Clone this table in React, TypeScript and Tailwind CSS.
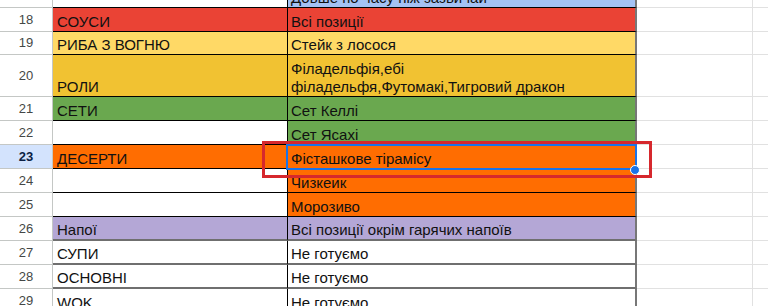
import React from "react";

type Row = {
  n: number;
  h: number;
  a: string;
  b: React.ReactNode;
  aBg: string;
  bBg: string;
  line: "black" | "gray";
};

const RED = "bg-[#ea4335]";
const YEL = "bg-[#ffd966]";
const GOLD = "bg-[#f1c232]";
const GREEN = "bg-[#6aa84f]";
const ORANGE = "bg-[#ff6d01]";
const PURPLE = "bg-[#b4a7d6]";
const WHITE = "bg-white";

const rows: Row[] = [
  { n: 17, h: 8, a: "", b: "Довше по часу ніж зазвичай", aBg: WHITE, bBg: "bg-[#a4c2f4]", line: "black" },
  { n: 18, h: 24, a: "СОУСИ", b: "Всі позиції", aBg: RED, bBg: RED, line: "black" },
  { n: 19, h: 23, a: "РИБА З ВОГНЮ", b: "Стейк з лосося", aBg: YEL, bBg: YEL, line: "black" },
  {
    n: 20,
    h: 42,
    a: "РОЛИ",
    b: (
      <>
        Філадельфія,ебі
        <br />
        філадельфя,Футомакі,Тигровий дракон
      </>
    ),
    aBg: GOLD,
    bBg: GOLD,
    line: "black",
  },
  { n: 21, h: 24, a: "СЕТИ", b: "Сет Келлі", aBg: GREEN, bBg: GREEN, line: "black" },
  { n: 22, h: 24, a: "", b: "Сет Ясахі", aBg: WHITE, bBg: GREEN, line: "black" },
  { n: 23, h: 24, a: "ДЕСЕРТИ", b: "Фісташкове тірамісу", aBg: ORANGE, bBg: ORANGE, line: "black" },
  { n: 24, h: 24, a: "", b: "Чизкеик", aBg: WHITE, bBg: ORANGE, line: "black" },
  { n: 25, h: 24, a: "", b: "Морозиво", aBg: WHITE, bBg: ORANGE, line: "black" },
  { n: 26, h: 24, a: "Напої", b: "Всі позиції окрім гарячих напоїв", aBg: PURPLE, bBg: PURPLE, line: "gray" },
  { n: 27, h: 24, a: "СУПИ", b: "Не готуємо", aBg: WHITE, bBg: WHITE, line: "gray" },
  { n: 28, h: 24, a: "ОСНОВНІ", b: "Не готуємо", aBg: WHITE, bBg: WHITE, line: "gray" },
  { n: 29, h: 24, a: "WOK", b: "Не готуємо", aBg: WHITE, bBg: WHITE, line: "black" },
];

function SheetRow({ row }: { row: Row }) {
  const selected = row.n === 23;
  const bottom =
    row.line === "gray" ? "border-b-2 border-b-[#6f6f6f]" : "border-b border-b-black";
  return (
    <div className="flex shrink-0" style={{ height: row.h }}>
      {/* row header */}
      <div
        className={
          "w-[53px] shrink-0 flex items-center justify-center border-r border-b border-[#c4c7c5] text-[13px] " +
          (selected ? "bg-[#d3e3fd] font-bold text-[#0b1f44]" : "bg-white text-[#444746]")
        }
      >
        {row.h > 10 ? row.n : ""}
      </div>
      {/* column A */}
      <div
        className={
          "w-[235px] shrink-0 flex items-end overflow-hidden pl-[4px] border-r border-r-black " +
          bottom +
          " " +
          row.aBg
        }
      >
        <span className="whitespace-nowrap">{row.a}</span>
      </div>
      {/* column B */}
      <div
        className={
          "w-[349px] shrink-0 flex items-end overflow-hidden pl-[3px] border-r-2 border-r-[#777777] " +
          bottom +
          " " +
          row.bBg
        }
      >
        <span className="whitespace-nowrap">{row.b}</span>
      </div>
      {/* empty columns */}
      <div className="w-[116px] shrink-0 border-r border-b border-[#e1e1e1] bg-white" />
      <div className="flex-1 border-b border-[#e1e1e1] bg-white" />
    </div>
  );
}

export default function App() {
  return (
    <div
      className="relative w-[768px] h-[306px] overflow-hidden bg-white text-[15px] leading-[18px] text-[#111]"
      style={{ fontFamily: '"Liberation Sans", Arial, sans-serif' }}
    >
      <div className="flex flex-col">
        {rows.map((r) => (
          <SheetRow key={r.n} row={r} />
        ))}
      </div>

      {/* selected cell */}
      <div className="absolute left-[286px] top-[144px] w-[351px] h-[26px] border-2 border-[#1a73e8]" />
      <div className="absolute left-[630px] top-[165px] w-[10px] h-[10px] rounded-full bg-[#1a73e8] border border-white" />

      {/* red annotation box */}
      <div className="absolute left-[262px] top-[141px] w-[390px] h-[37px] border-[3px] border-[#d6282d]" />
    </div>
  );
}
